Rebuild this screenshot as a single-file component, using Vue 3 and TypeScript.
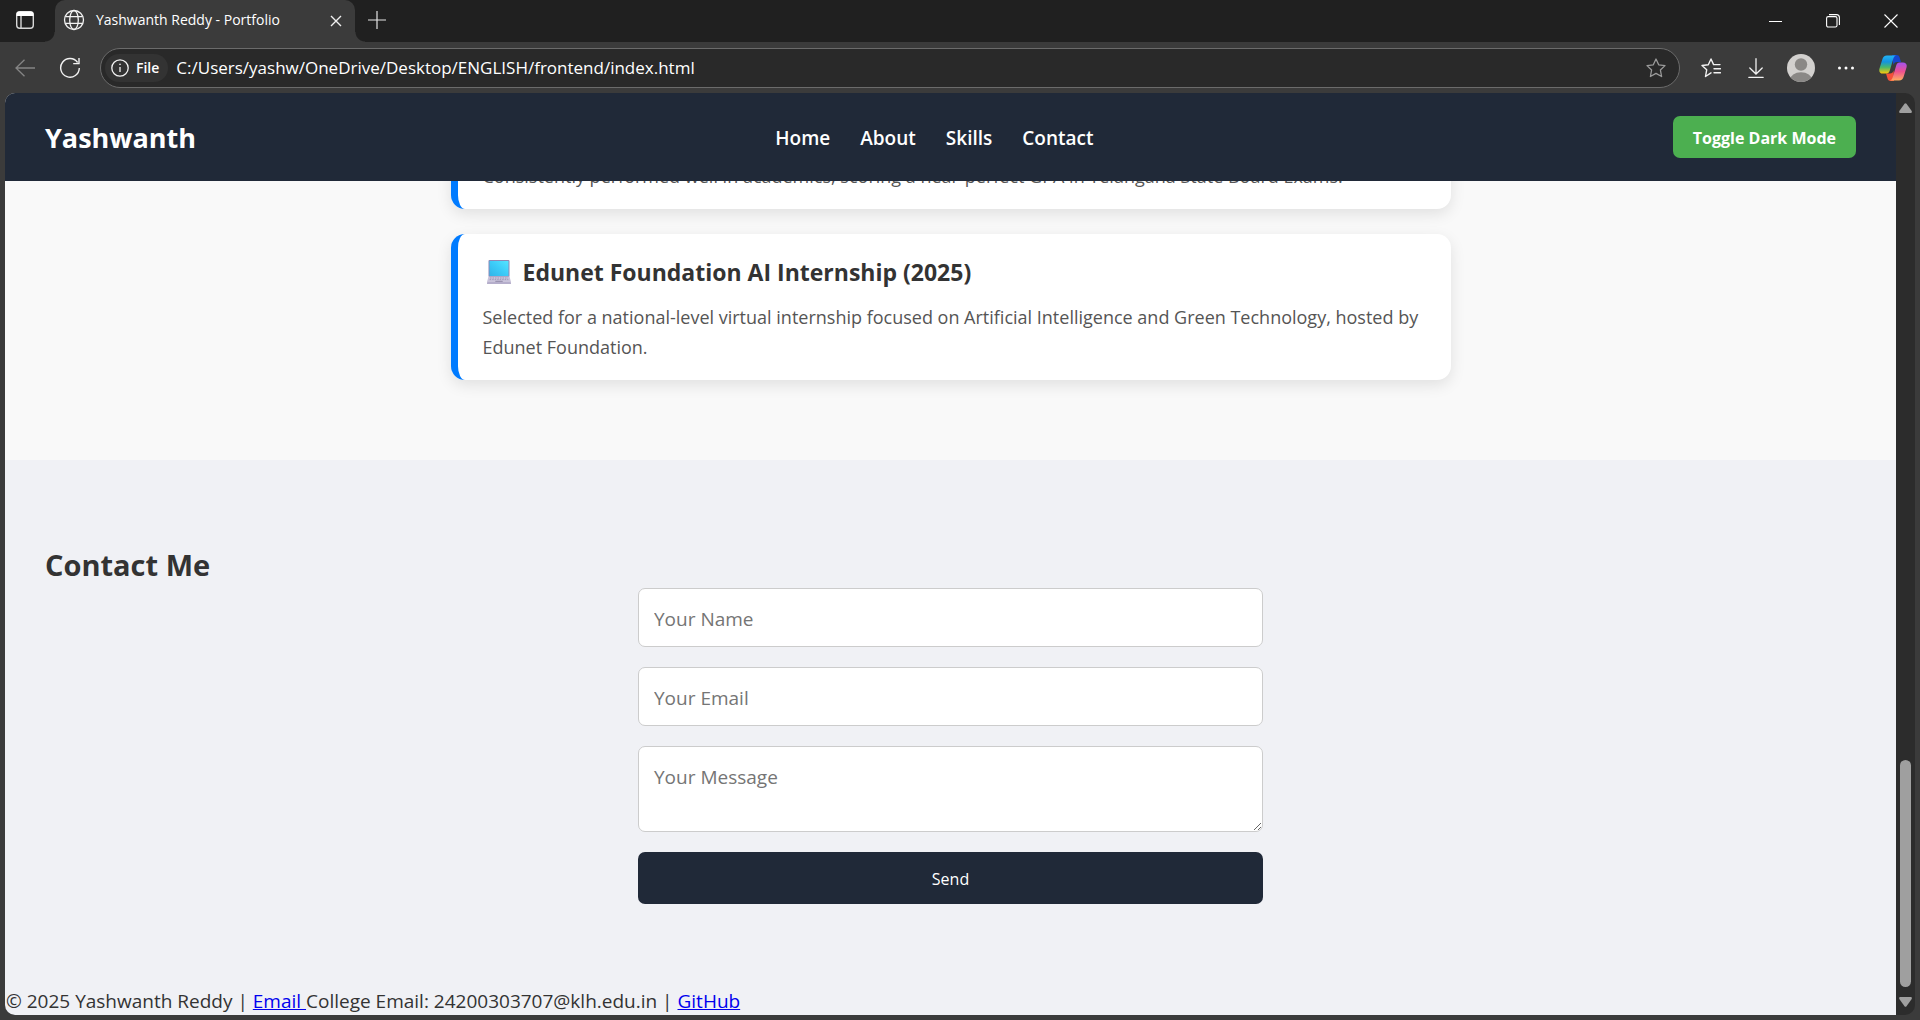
<script setup lang="ts">
import { ref } from 'vue'

interface Achievement {
  title: string
  laptop: boolean
  text: string
}

const navLinks: string[] = ['Home', 'About', 'Skills', 'Contact']

const achievements: Achievement[] = [
  {
    title: '',
    laptop: false,
    text: 'Consistently performed well in academics, scoring a near-perfect GPA in Telangana State Board Exams.',
  },
  {
    title: 'Edunet Foundation AI Internship (2025)',
    laptop: true,
    text: 'Selected for a national-level virtual internship focused on Artificial Intelligence and Green Technology, hosted by Edunet Foundation.',
  },
]

const name = ref('')
const email = ref('')
const message = ref('')
const address = ref('C:/Users/yashw/OneDrive/Desktop/ENGLISH/frontend/index.html')
</script>

<template>
  <div class="browser">
    <div class="tab-strip">
      <button class="tab-actions" type="button" aria-label="Tab actions">
        <svg width="20" height="20" viewBox="0 0 20 20" fill="none">
          <rect x="1.7" y="1.7" width="16.6" height="16.6" rx="3" stroke="#d8d8d8" stroke-width="1.4" />
          <path d="M1.5 6V4.5a3 3 0 0 1 3-3h11a3 3 0 0 1 3 3V6z" fill="#fff" />
          <path d="M6 6v12" stroke="#d8d8d8" stroke-width="1.4" />
        </svg>
      </button>
      <div class="tab">
        <svg width="22" height="22" viewBox="0 0 22 22" fill="none" stroke="#f2f2f2" stroke-width="1.3">
          <circle cx="11" cy="11" r="9.5" />
          <ellipse cx="11" cy="11" rx="4.3" ry="9.5" />
          <path d="M2.4 7.7h17.2M2.4 14.3h17.2" />
        </svg>
        <span class="tab-title">Yashwanth Reddy - Portfolio</span>
        <button class="tab-close" type="button" aria-label="Close tab">
          <svg width="12" height="12" viewBox="0 0 12 12" stroke="#f0f0f0" stroke-width="1.4">
            <path d="M1 1l10 10M11 1L1 11" />
          </svg>
        </button>
      </div>
      <button class="new-tab" type="button" aria-label="New tab">
        <svg width="18" height="18" viewBox="0 0 18 18" stroke="#e4e4e4" stroke-width="1.2">
          <path d="M9 0v18M0 9h18" />
        </svg>
      </button>
      <div class="window-controls">
        <button type="button" aria-label="Minimize">
          <svg width="14" height="14" viewBox="0 0 14 14" stroke="#fff" stroke-width="1"><path d="M1 7.5h13" /></svg>
        </button>
        <button type="button" aria-label="Restore">
          <svg width="14" height="14" viewBox="0 0 14 14" fill="none" stroke="#fff" stroke-width="1.1">
            <rect x="0.6" y="2.6" width="10.4" height="10.4" rx="1.6" />
            <path d="M3 .6h7.4a3 3 0 0 1 3 3V11" />
          </svg>
        </button>
        <button type="button" aria-label="Close window">
          <svg width="14" height="14" viewBox="0 0 14 14" stroke="#fff" stroke-width="1.1"><path d="M.5.5l13 13M13.5.5l-13 13" /></svg>
        </button>
      </div>
    </div>

    <div class="toolbar">
      <button class="back" type="button" aria-label="Back">
        <svg width="20" height="18" viewBox="0 0 20 18" fill="none" stroke="#858585" stroke-width="1.3">
          <path d="M20 9H1M9.5.7L1 9l8.500 8.300" />
        </svg>
      </button>
      <button class="reload" type="button" aria-label="Refresh">
        <svg width="22" height="22" viewBox="0 0 22 22" fill="none" stroke="#f2f2f2" stroke-width="1.4">
          <path d="M18.600 5.500A9.300 9.300 0 1 0 20.300 11" />
          <path d="M20 1v5.600h-5.800" />
        </svg>
      </button>
      <div class="address-bar">
        <button class="file-chip" type="button">
          <svg width="18" height="18" viewBox="0 0 18 18" fill="none" stroke="#f2f2f2" stroke-width="1.3">
            <circle cx="9" cy="9" r="8.200" />
            <path d="M9 8v5" />
            <circle cx="9" cy="5.300" r=".5" fill="#f2f2f2" stroke-width=".7" />
          </svg>
          <span>File</span>
        </button>
        <input v-model="address" class="url" type="text" aria-label="Address" />
        <button class="star" type="button" aria-label="Add to favorites">
          <svg width="20" height="20" viewBox="0 0 20 20" fill="none" stroke="#9a9a9a" stroke-width="1.3" stroke-linejoin="round">
            <path d="M10 1l2.700 5.800 6.300.8-4.600 4.400 1.200 6.500L10 15.400l-5.600 3.100 1.200-6.500L1 7.600l6.300-.8z" />
          </svg>
        </button>
      </div>
      <div class="tools">
        <button type="button" aria-label="Favorites">
          <svg width="20" height="20" viewBox="0 0 20 20" fill="none" stroke="#f2f2f2" stroke-width="1.4" stroke-linejoin="round" stroke-linecap="round">
            <path d="M10 14.800l-5.500 3.700 1.200-6.700L1 7.500l6.300-.8L10 1l2.600 5.600H19M13 10.800h6.500M13 14.800h6.500" />
          </svg>
        </button>
        <button type="button" aria-label="Downloads">
          <svg width="16" height="20" viewBox="0 0 16 20" fill="none" stroke="#f2f2f2" stroke-width="1.300" stroke-linecap="round">
            <path d="M8 .7v15M1.800 10L8 16l6.200-6M.8 19.300h14.400" />
          </svg>
        </button>
        <button type="button" aria-label="Profile">
          <svg width="28" height="28" viewBox="0 0 28 28">
            <defs><clipPath id="avatar"><circle cx="14" cy="14" r="14" /></clipPath></defs>
            <circle cx="14" cy="14" r="14" fill="#d2d0ce" />
            <g clip-path="url(#avatar)" fill="#8a8886">
              <circle cx="14" cy="10.500" r="6.200" />
              <ellipse cx="14" cy="26" rx="11" ry="7.800" />
            </g>
          </svg>
        </button>
        <button type="button" aria-label="Settings and more">
          <svg width="18" height="4" viewBox="0 0 18 4" fill="#fff">
            <circle cx="2.500" cy="2" r="1.500" /><circle cx="9" cy="2" r="1.500" /><circle cx="15.500" cy="2" r="1.500" />
          </svg>
        </button>
        <button type="button" aria-label="Copilot">
          <svg width="28" height="26" viewBox="0 0 28 26">
            <defs>
              <linearGradient id="cp-left" x1="0" y1="0" x2="0" y2="1">
                <stop offset="0" stop-color="#22b4f5" /><stop offset=".35" stop-color="#1493e0" />
                <stop offset=".65" stop-color="#48b86c" /><stop offset="1" stop-color="#fdc90a" />
              </linearGradient>
              <linearGradient id="cp-right" x1="0" y1="0" x2="0" y2="1">
                <stop offset="0" stop-color="#a352f0" /><stop offset=".5" stop-color="#ee5090" /><stop offset="1" stop-color="#ffad60" />
              </linearGradient>
            </defs>
            <path d="M13 0h4.500c1.600 0 2.500.8 3 2.300L22 7h-4c-2 0-3 1-3.600 3z" fill="#1646cc" />
            <path d="M15 26h-3.500c-1.700 0-2.600-1-3-2.500L7 18.500h4c2 0 3-1 3.600-3z" fill="#f5513a" />
            <path d="M8 .5h9c-1.600.4-2.200 1.600-2.800 3.500l-3.400 11.500c-.6 2-1.600 3-3.400 3H4c-3 0-4.300-2-3.500-5L3.300 4.500C4 2 5.500.5 8 .5z" fill="url(#cp-left)" />
            <path d="M20 25.500h-9c1.600-.4 2.200-1.600 2.800-3.500l3.400-11.500c.6-2 1.600-3 3.400-3H24c3 0 4.300 2 3.500 5l-2.800 9c-.7 2.500-2.200 4-4.700 4z" fill="url(#cp-right)" />
          </svg>
        </button>
      </div>
    </div>

    <div class="viewport">
      <div class="page">
        <header class="site-header">
          <h1 class="logo">Yashwanth</h1>
          <nav>
            <a v-for="link in navLinks" :key="link" :href="'#' + link.toLowerCase()">{{ link }}</a>
          </nav>
          <button class="toggle" type="button">Toggle Dark Mode</button>
        </header>

        <main class="scroll-area">
          <section class="achievements">
            <article v-for="item in achievements" :key="item.text" class="card">
              <h3 v-if="item.title">
                <svg v-if="item.laptop" width="24" height="24" viewBox="0 0 24 24" role="img" aria-label="Laptop">
                  <defs>
                    <linearGradient id="screen" x1="0" y1="1" x2="1" y2="0">
                      <stop offset="0" stop-color="#2fb4e8" /><stop offset=".5" stop-color="#3ccbf8" /><stop offset="1" stop-color="#55e4ff" />
                    </linearGradient>
                  </defs>
                  <rect x="1.500" y="0" width="21" height="17" rx="1" fill="#8f87b5" />
                  <rect x="2.500" y="1" width="19" height="15" fill="url(#screen)" />
                  <path d="M1.500 16.500h21L24 22H0z" fill="#c9c3da" />
                  <path d="M3 18h18M2.700 19.600h18.600" stroke="#9c95b5" stroke-width=".9" stroke-dasharray="1.500 1" />
                  <path d="M8.500 20.800h7l.5 2H8z" fill="#9a93b0" />
                  <rect x="0" y="22" width="24" height="2" rx=".6" fill="#b5aecb" />
                </svg>
                <span>{{ item.title }}</span>
              </h3>
              <p>{{ item.text }}</p>
            </article>
          </section>

          <section class="contact">
            <h2>Contact Me</h2>
            <form @submit.prevent>
              <input v-model="name" type="text" placeholder="Your Name" aria-label="Your Name" />
              <input v-model="email" type="email" placeholder="Your Email" aria-label="Your Email" />
              <textarea v-model="message" placeholder="Your Message" aria-label="Your Message"></textarea>
              <button type="submit">Send</button>
            </form>
          </section>

          <footer>
            © 2025 Yashwanth Reddy | <a href="#email">Email&nbsp;</a>College Email: 24200303707@klh.edu.in | <a href="#github">GitHub</a>
          </footer>
        </main>
      </div>

      <div class="scrollbar" aria-hidden="true">
        <svg width="13" height="10" viewBox="0 0 13 10" fill="#9f9f9f"><path d="M5.500.8Q6.500-.4 7.500.8L12.700 8Q13.300 10 11.800 10H1.200Q-.3 10 .3 8z" /></svg>
        <div class="track"><div class="thumb"></div></div>
        <svg width="13" height="10" viewBox="0 0 13 10" fill="#9f9f9f"><path d="M5.500 9.200Q6.500 10.400 7.500 9.200L12.700 2Q13.300 0 11.800 0H1.200Q-.3 0 .3 2z" /></svg>
      </div>
    </div>
  </div>
</template>

<style>
body {
  margin: 0;
  background: #3b3b3b;
}
</style>

<style scoped>
.browser,
.browser * {
  box-sizing: border-box;
}

.browser {
  display: flex;
  flex-direction: column;
  height: 100vh;
  overflow: hidden;
  background: #3b3b3b;
  font-family: 'Open Sans', 'Noto Sans', sans-serif;
}

button,
input,
textarea {
  font-family: inherit;
}

button {
  padding: 0;
  border: 0;
  background: none;
  cursor: pointer;
}

svg {
  display: block;
  flex: none;
}

/* Tab strip */
.tab-strip {
  display: flex;
  flex: none;
  height: 42px;
  background: #202020;
}

.tab-actions {
  display: flex;
  align-items: center;
  justify-content: center;
  width: 55px;
  padding: 0 5px 2px 0;
  background: #202020;
}

.tab {
  position: relative;
  display: flex;
  align-items: center;
  width: 300px;
  padding: 0 12px 2px 8px;
  border-radius: 10px 10px 0 0;
  background: #3b3b3b;
}

.tab::before,
.tab::after {
  content: '';
  position: absolute;
  bottom: 0;
  width: 10px;
  height: 10px;
}

.tab::before {
  right: 100%;
  background: radial-gradient(circle at 0 0, #202020 9px, #3b3b3b 10px);
}

.tab::after {
  left: 100%;
  background: radial-gradient(circle at 100% 0, #202020 9px, #3b3b3b 10px);
}

.tab-title {
  flex: 1;
  margin-left: 11px;
  color: #fff;
  font-size: 14px;
  line-height: 20px;
  white-space: nowrap;
}

.tab-close {
  padding: 2px 1px 0;
}

.new-tab {
  display: flex;
  align-items: center;
  justify-content: center;
  width: 44px;
  padding-bottom: 3px;
}

.window-controls {
  display: flex;
  margin-left: auto;
}

.window-controls button {
  display: flex;
  align-items: center;
  justify-content: center;
  width: 58px;
}

/* Toolbar */
.toolbar {
  display: flex;
  flex: none;
  align-items: center;
  height: 51px;
  padding: 0 2px 0 15px;
}

.reload {
  margin: 0 19px 0 24px;
}

.address-bar {
  display: flex;
  flex: 1;
  align-items: center;
  height: 40px;
  padding: 0 13px 0 4px;
  border: 1px solid #6b6b6b;
  border-radius: 20px;
  background: #292929;
}

.file-chip {
  display: flex;
  align-items: center;
  gap: 7px;
  height: 28px;
  padding: 0 9px 0 6px;
  border-radius: 14px;
  background: #333;
  color: #fff;
  font-size: 14px;
  font-weight: 600;
}

.url {
  flex: 1;
  min-width: 0;
  margin: 0 8px;
  padding: 0;
  border: 0;
  outline: 0;
  background: none;
  color: #fff;
  font-size: 17px;
  line-height: 24px;
}

.tools {
  display: flex;
  align-items: center;
  margin-left: 8px;
}

.tools button {
  display: flex;
  align-items: center;
  justify-content: center;
  width: 45px;
  height: 40px;
}

.tools button:last-child {
  width: 50px;
}

/* Web page */
.viewport {
  display: flex;
  flex: 1;
  min-height: 0;
  margin: 0 5px 5px;
  overflow: hidden;
  border-radius: 10px;
  background: #2c2c2c;
}

.page {
  display: flex;
  flex: 1;
  flex-direction: column;
  min-width: 0;
  background: #f0f1f5;
}

.site-header {
  display: flex;
  flex: none;
  align-items: center;
  justify-content: space-between;
  height: 88px;
  padding: 0 40px;
  background: #202938;
  color: #fff;
}

.logo {
  margin: 0;
  padding-top: 2px;
  font-size: 27px;
  line-height: 40px;
}

nav {
  display: flex;
  gap: 30px;
  padding-top: 2px;
}

nav a {
  color: #fff;
  font-size: 19px;
  font-weight: 600;
  line-height: 28px;
  text-decoration: none;
}

.toggle {
  height: 42px;
  padding: 2px 20px 0;
  border-radius: 7px;
  background: #4caf50;
  color: #fff;
  font-size: 16px;
  font-weight: 700;
}

.scroll-area {
  display: flex;
  flex: 1;
  flex-direction: column;
  justify-content: flex-end;
  min-height: 0;
  overflow: hidden;
}

.achievements {
  display: flex;
  flex: none;
  flex-direction: column;
  align-items: center;
  gap: 25px;
  padding: 80px 40px;
  background: #f9f9f9;
}

.card {
  width: 100%;
  max-width: 1000px;
  padding: 20px 24px 18px 25px;
  border-left: 7px solid #007bff;
  border-radius: 14px;
  background: #fff;
  box-shadow: 0 5px 15px rgba(0, 0, 0, 0.1);
}

.card h3 {
  display: flex;
  align-items: center;
  gap: 12px;
  margin: 0 0 12px;
  padding-left: 4px;
  color: #333;
  font-size: 23px;
  line-height: 36px;
}

.card p {
  margin: 0;
  color: #555;
  font-size: 18px;
  line-height: 30px;
}

.contact {
  flex: none;
  padding: 82px 40px 83px;
}

.contact h2 {
  margin: 0;
  color: #333;
  font-size: 29px;
  line-height: 46px;
}

form {
  display: flex;
  flex-direction: column;
  gap: 20px;
  max-width: 625px;
  margin: 0 auto;
}

form input,
form textarea {
  width: 100%;
  height: 59px;
  padding: 16px 15px 14px;
  border: 1px solid #ccc;
  border-radius: 7px;
  background: #fff;
  color: #333;
  font-size: 19px;
  line-height: 28px;
}

form textarea {
  height: 86px;
  resize: vertical;
}

form ::placeholder {
  color: #757575;
}

form button {
  height: 52px;
  padding-top: 2px;
  border-radius: 7px;
  background: #202938;
  color: #fff;
  font-size: 16px;
}

footer {
  flex: none;
  padding-left: 1px;
  color: #333;
  font-size: 19px;
  line-height: 28px;
}

footer a {
  color: #0000ee;
}

.scrollbar {
  display: flex;
  flex: none;
  flex-direction: column;
  align-items: center;
  width: 19px;
  padding: 10px 0 8px;
}

.track {
  display: flex;
  flex: 1;
  flex-direction: column;
  justify-content: flex-end;
  padding: 10px 0;
}

.thumb {
  width: 11px;
  height: 227px;
  border-radius: 6px;
  background: #9f9f9f;
}
</style>
